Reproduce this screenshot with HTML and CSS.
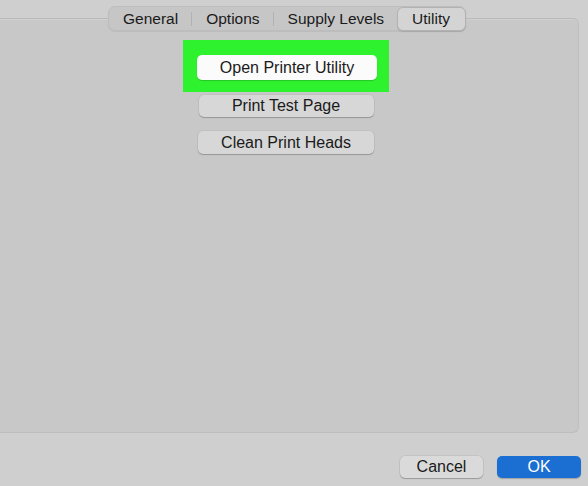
FILE: index.html
```html
<!DOCTYPE html>
<html>
<head>
<meta charset="utf-8">
<link rel="stylesheet" href="styles.css">
</head>
<body>
<div class="window">
  <div class="tabs-row">
    <div class="tabs">
      <div class="tab">General</div>
      <div class="sep"></div>
      <div class="tab">Options</div>
      <div class="sep"></div>
      <div class="tab">Supply Levels</div>
      <div class="tab selected">Utility</div>
    </div>
  </div>
  <div class="panel">
    <div class="actions">
      <div class="highlight">
        <button class="btn btn-white">Open Printer Utility</button>
      </div>
      <button class="btn btn-gray">Print Test Page</button>
      <button class="btn btn-gray btn-clean">Clean Print Heads</button>
    </div>
  </div>
  <div class="footer">
    <button class="btn btn-cancel">Cancel</button>
    <button class="btn btn-ok">OK</button>
  </div>
</div>
</body>
</html>
```
FILE: styles.css
```css
html, body {
  margin: 0;
  padding: 0;
  background: #cfcfcf;
  width: 588px;
  height: 486px;
  overflow: hidden;
  font-family: "Liberation Sans", Arial, sans-serif;
  color: #1a1a1a;
}
.window {
  display: flex;
  flex-direction: column;
  height: 486px;
}
.tabs-row {
  display: flex;
  padding: 6px 0 0 108px;
  position: relative;
  z-index: 2;
}
.tabs {
  display: flex;
  align-items: center;
  height: 25px;
  background: #c6c6c6;
  border: 1px solid #bdbdbd;
  border-radius: 7px;
  box-sizing: border-box;
  box-shadow: 0 1px 1px rgba(0,0,0,0.06);
}
.tab {
  font-size: 15.5px;
  line-height: 23px;
  padding: 0 13px 0 14px;
  height: 23px;
  box-sizing: border-box;
}
.tab.selected {
  background: #d4d4d4;
  border: 1px solid #b3b3b3;
  border-radius: 6px;
  line-height: 21px;
  height: 24px;
  margin-top: 1px;
  margin-right: -1px;
  padding: 0 15px 0 14px;
  box-shadow: 0 1px 1px rgba(0,0,0,0.12);
}
.sep {
  width: 1px;
  height: 14px;
  background: #b2b2b2;
}
.panel {
  margin: -13px 0 0 -10px;
  width: 589px;
  height: 415px;
  box-sizing: border-box;
  background: #c8c8c8;
  border: 1px solid #bebebe;
  border-top-color: #b9b9b9;
  border-radius: 6px;
  box-shadow: inset 0 1px 0 #d2d2d2;
  position: relative;
  z-index: 1;
}
.actions {
  display: flex;
  flex-direction: column;
  align-items: center;
  padding: 21px 0 0 3px;
}
.highlight {
  background: #2ef22e;
  padding: 15px 12px 12px 14px;
  width: 206px;
  box-sizing: border-box;
}
.btn {
  font-family: "Liberation Sans", Arial, sans-serif;
  font-size: 16px;
  color: #1a1a1a;
  border: none;
  border-radius: 5px;
  padding: 0;
  margin: 0;
  cursor: default;
}
.btn-white {
  display: block;
  width: 180px;
  height: 25px;
  background: #fbfbfb;
  box-shadow: 0 1px 1px rgba(0,0,0,0.18);
}
.btn-gray {
  width: 175px;
  height: 22px;
  margin-top: 3px;
  background: #d7d7d7;
  box-shadow: 0 1px 1px rgba(0,0,0,0.22), 0 0 0 0.5px rgba(0,0,0,0.08);
}
.btn-clean {
  margin-top: 14px;
  width: 176px;
  height: 23px;
}
.footer {
  display: flex;
  justify-content: flex-end;
  gap: 14px;
  padding: 23px 7px 0 0;
}
.btn-cancel {
  width: 83px;
  height: 22px;
  background: #dadada;
  box-shadow: 0 1px 1px rgba(0,0,0,0.22), 0 0 0 0.5px rgba(0,0,0,0.1);
}
.btn-ok {
  width: 84px;
  height: 22px;
  background: #1b6fd2;
  color: #ffffff;
  box-shadow: 0 1px 1px rgba(0,0,0,0.22);
}
```
